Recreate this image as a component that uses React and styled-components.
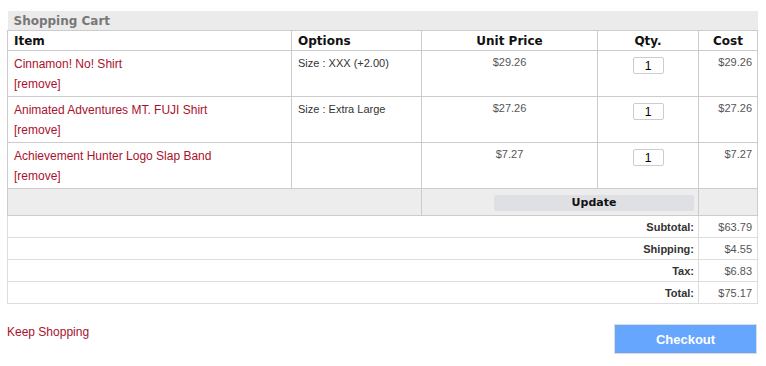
import React from 'react';
import styled, { createGlobalStyle } from 'styled-components';

const GlobalStyle = createGlobalStyle`
  body {
    margin: 0;
    background: #fff;
    font-family: "Liberation Sans", Arial, sans-serif;
  }
`;

const items = [
  { name: 'Cinnamon! No! Shirt', option: 'Size : XXX (+2.00)', price: '$29.26', qty: 1, cost: '$29.26' },
  { name: 'Animated Adventures MT. FUJI Shirt', option: 'Size : Extra Large', price: '$27.26', qty: 1, cost: '$27.26' },
  { name: 'Achievement Hunter Logo Slap Band', option: '', price: '$7.27', qty: 1, cost: '$7.27' },
];

const totals = [
  { label: 'Subtotal:', value: '$63.79' },
  { label: 'Shipping:', value: '$4.55' },
  { label: 'Tax:', value: '$6.83' },
  { label: 'Total:', value: '$75.17' },
];

const Page = styled.div`
  padding: 11px 9px 0 7px;
  width: 750px;
`;

const Cart = styled.table`
  width: 750px;
  border-collapse: collapse;
  table-layout: fixed;
`;

const Caption = styled.th`
  background: #ebebeb;
  color: #777;
  font-family: "DejaVu Sans", Verdana, sans-serif;
  font-size: 12px;
  font-weight: bold;
  text-align: left;
  height: 19px;
  padding: 0 0 0 6px;
  border-bottom: 1px solid #ccc;
`;

const Head = styled.th`
  font-family: "DejaVu Sans", Verdana, sans-serif;
  font-size: 12px;
  font-weight: bold;
  color: #111;
  text-align: ${p => p.$align || 'center'};
  padding: 0 0 0 ${p => (p.$align === 'left' ? '6px' : '0')};
  height: 19px;
  border: 1px solid #ccc;
`;

const Cell = styled.td`
  vertical-align: top;
  border: 1px solid #ccc;
  height: 41px;
  padding: ${p => p.$pad || '4px 6px 0'};
  text-align: ${p => p.$align || 'left'};
  font-size: 11px;
  color: #444;
`;

const ItemLink = styled.a`
  display: block;
  color: #a8122e;
  font-size: 12px;
  line-height: 20px;
  text-decoration: none;
`;

const Option = styled.div`
  font-size: 11px;
  color: #333;
  line-height: 16px;
`;

const Price = styled.div`
  font-size: 11px;
  color: #555;
  line-height: 14px;
`;

const QtyInput = styled.input`
  width: 31px;
  height: 17px;
  box-sizing: border-box;
  border: 1px solid #ccc;
  border-radius: 2px;
  margin-top: 2px;
  padding: 0;
  text-align: center;
  font-family: "Liberation Sans", Arial, sans-serif;
  font-size: 12px;
  color: #000;
  background: #fff;
`;

const GrayCell = styled.td`
  background: #ededed;
  border: 1px solid #ccc;
  height: 26px;
  padding: 0 4px 0 0;
  text-align: ${p => p.$align || 'left'};
`;

const UpdateButton = styled.button`
  width: 200px;
  height: 16px;
  border: none;
  border-radius: 2px;
  background: #dfe0e3;
  font-family: "DejaVu Sans", Verdana, sans-serif;
  font-size: 11px;
  font-weight: bold;
  color: #111;
  padding: 0;
  vertical-align: middle;
`;

const TotalLabel = styled.td`
  border: 1px solid #ddd;
  height: 21px;
  padding: 0 4px 0 0;
  text-align: right;
  font-size: 11px;
  font-weight: bold;
  color: #333;
`;

const TotalValue = styled.td`
  border: 1px solid #ddd;
  padding: 0 5px 0 0;
  text-align: right;
  font-size: 11px;
  color: #555;
`;

const Footer = styled.div`
  display: flex;
  justify-content: space-between;
  align-items: flex-start;
  margin-top: 20px;
`;

const KeepShopping = styled.a`
  color: #a8122e;
  font-size: 12px;
  text-decoration: none;
  margin-top: 1px;
`;

const CheckoutButton = styled.button`
  width: 143px;
  height: 30px;
  background: #66a6ff;
  border: 1px solid #dcdcdc;
  color: #fff;
  font-family: "Liberation Sans", Arial, sans-serif;
  font-size: 13px;
  font-weight: bold;
  padding: 0;
`;

export default function App() {
  return (
    <>
      <GlobalStyle />
      <Page>
        <Cart>
          <colgroup>
            <col style={{ width: 284 }} />
            <col style={{ width: 130 }} />
            <col style={{ width: 176 }} />
            <col style={{ width: 101 }} />
            <col style={{ width: 59 }} />
          </colgroup>
          <thead>
            <tr>
              <Caption colSpan={5}>Shopping Cart</Caption>
            </tr>
            <tr>
              <Head $align="left">Item</Head>
              <Head $align="left">Options</Head>
              <Head>Unit Price</Head>
              <Head>Qty.</Head>
              <Head>Cost</Head>
            </tr>
          </thead>
          <tbody>
            {items.map(item => (
              <tr key={item.name}>
                <Cell $pad="3px 6px 1px">
                  <ItemLink href="#">{item.name}</ItemLink>
                  <ItemLink href="#">[remove]</ItemLink>
                </Cell>
                <Cell $pad="4px 6px 0">
                  <Option>{item.option}</Option>
                </Cell>
                <Cell $align="center">
                  <Price>{item.price}</Price>
                </Cell>
                <Cell $align="center">
                  <QtyInput defaultValue={item.qty} />
                </Cell>
                <Cell $align="right" $pad="4px 5px 0 0">
                  <Price>{item.cost}</Price>
                </Cell>
              </tr>
            ))}
            <tr>
              <GrayCell colSpan={2} />
              <GrayCell colSpan={2} $align="right">
                <UpdateButton>Update</UpdateButton>
              </GrayCell>
              <GrayCell />
            </tr>
            {totals.map(t => (
              <tr key={t.label}>
                <TotalLabel colSpan={4}>{t.label}</TotalLabel>
                <TotalValue>{t.value}</TotalValue>
              </tr>
            ))}
          </tbody>
        </Cart>
        <Footer>
          <KeepShopping href="#">Keep Shopping</KeepShopping>
          <CheckoutButton>Checkout</CheckoutButton>
        </Footer>
      </Page>
    </>
  );
}
